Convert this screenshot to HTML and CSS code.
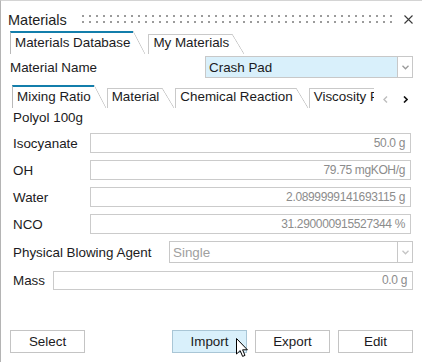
FILE: index.html
```html
<!DOCTYPE html>
<html>
<head>
<meta charset="utf-8">
<link rel="stylesheet" href="styles.css">
</head>
<body>
<div class="panel">
  <div class="header">
    <span class="title">Materials</span>
    <span class="grip"></span>
    <svg class="close" width="9" height="9" viewBox="0 0 9 9"><path d="M0.5 0.5L8.5 8.5M8.5 0.5L0.5 8.5" stroke="#3a3a3a" stroke-width="1.1" fill="none"/></svg>
  </div>

  <div class="tabs tabs-top">
    <div class="tab active">Materials Database</div>
    <div class="tab">My Materials</div>
  </div>

  <div class="name-row">
    <span class="name-label">Material Name</span>
    <div class="combo combo-blue">
      <span class="combo-text">Crash Pad</span>
      <span class="combo-btn"><svg width="7" height="5" viewBox="0 0 7 5"><path d="M0.5 0.8L3.5 3.8L6.5 0.8" stroke="#9a9a9a" stroke-width="1.3" fill="none"/></svg></span>
    </div>
  </div>

  <div class="subtabs">
    <div class="strip">
      <div class="tab active">Mixing Ratio</div>
      <div class="tab">Material</div>
      <div class="tab">Chemical Reaction</div>
      <div class="tab">Viscosity Profile</div>
    </div>
    <div class="scrollers">
      <svg width="5" height="7" viewBox="0 0 5 7"><path d="M4 0.5L1 3.5L4 6.5" stroke="#bdbdbd" stroke-width="1.4" fill="none"/></svg>
      <svg width="5" height="7" viewBox="0 0 5 7"><path d="M1 0.5L4 3.5L1 6.5" stroke="#111" stroke-width="1.6" fill="none"/></svg>
    </div>
  </div>

  <div class="polyol">Polyol 100g</div>

  <div class="grid-rows">
    <span class="lbl">Isocyanate</span><div class="field">50.0 g</div>
    <span class="lbl">OH</span><div class="field">79.75 mgKOH/g</div>
    <span class="lbl">Water</span><div class="field">2.0899999141693115 g</div>
    <span class="lbl">NCO</span><div class="field">31.290000915527344 %</div>
  </div>

  <div class="row row-pba">
    <span class="lbl lbl-pba">Physical Blowing Agent</span>
    <div class="combo combo-white">
      <span class="combo-text placeholder">Single</span>
      <span class="combo-btn"><svg width="7" height="5" viewBox="0 0 7 5"><path d="M0.5 0.8L3.5 3.8L6.5 0.8" stroke="#c4c4c4" stroke-width="1.3" fill="none"/></svg></span>
    </div>
  </div>

  <div class="row row-mass">
    <span class="lbl lbl-mass">Mass</span>
    <div class="field">0.0 g</div>
  </div>

  <div class="buttons">
    <button class="btn">Select</button>
    <span class="spacer"></span>
    <button class="btn btn-hover">Import
      <svg class="cursor" width="13" height="20" viewBox="0 0 13 20"><path d="M0.5 0.5L0.5 16L4.2 12.6L6.6 18.4L9 17.4L6.6 11.8L11.4 11.8Z" fill="#fff" stroke="#000" stroke-width="1" stroke-linejoin="miter"/></svg>
    </button>
    <button class="btn">Export</button>
    <button class="btn">Edit</button>
  </div>
</div>
</body>
</html>
```

FILE: styles.css
```css
* { box-sizing: border-box; }
html, body { margin: 0; padding: 0; background: #fff; }
body {
  font-family: "Liberation Sans", Arial, sans-serif;
  font-size: 13.4px;
  color: #1b1b22;
}
.panel {
  width: 422px;
  height: 362px;
  border-top: 1px solid #d4d4d4;
  border-left: 1px solid #b4b4b4;
  padding: 10px 9px 9px 9px;
  display: flex;
  flex-direction: column;
  overflow: hidden;
}
.header {
  display: flex;
  align-items: flex-start;
  height: 18px;
  margin-left: -2px;
}
.title {
  font-size: 14.5px;
  line-height: 18px;
  color: #1e1e1e;
}
.grip {
  flex: 1;
  height: 8px;
  margin: 4px 10px 0 15px;
  background-image: radial-gradient(circle at 1px 1px, #9b9b9b 0.8px, transparent 1.1px);
  background-size: 7px 6px;
}
.close { flex: none; margin-top: 4px; }

.tabs {
  display: flex;
  align-items: flex-end;
  height: 23px;
}
.tabs-top { margin-top: 2px; }
.tab {
  position: relative;
  height: 20px;
  line-height: 16px;
  padding: 0 3px 3px 4px;
  display: flex;
  align-items: flex-end;
  border-top: 1px solid #c9c9c9;
  border-left: 1px solid #c9c9c9;
  margin-right: 15px;
  white-space: nowrap;
  flex: none;
}
.tab::after {
  content: "";
  position: absolute;
  left: 100%;
  top: -1px;
  bottom: 0;
  width: 12px;
  background: linear-gradient(to top right, transparent calc(50% - 0.7px), #c6c6c6 50%, transparent calc(50% + 0.7px));
}
.tab.active {
  height: 23px;
  border-top: 2px solid #137eab;
  border-left-color: #b9b9b9;
}
.tab.active::after { top: -2px; }

.name-row {
  display: flex;
  align-items: center;
  margin-top: 2px;
  height: 22px;
}
.name-label { width: 195px; flex: none; }
.combo {
  flex: 1;
  display: flex;
  height: 100%;
  border: 1px solid #c8c8c8;
}
.combo-blue { background: #d9f0fb; }
.combo-white { background: #fff; }
.combo-text {
  flex: 1;
  padding-left: 3px;
  display: flex;
  align-items: center;
}
.placeholder { color: #a0a0a0; }
.combo-btn {
  width: 15px;
  flex: none;
  background: #fff;
  border-left: 1px solid #c8c8c8;
  display: flex;
  align-items: center;
  justify-content: center;
}

.subtabs {
  display: flex;
  align-items: flex-end;
  height: 23px;
  margin-top: 7px;
  padding-left: 2px;
}
.subtabs .tab { margin-right: 13px; }
.strip {
  display: flex;
  align-items: flex-end;
  width: 362px;
  height: 23px;
  overflow: hidden;
  flex: none;
}
.scrollers {
  flex: 1;
  display: flex;
  align-items: center;
  align-self: center;
  gap: 15px;
  padding-left: 9px;
  margin-top: 6px;
}

.polyol {
  margin-top: 2px;
  padding-left: 3px;
  line-height: 16px;
}

.grid-rows {
  margin-top: 7px;
  display: grid;
  grid-template-columns: 77px 1fr;
  grid-auto-rows: 20px;
  row-gap: 7px;
  padding-left: 3px;
  padding-right: 2px;
  align-items: center;
}
.field {
  height: 20px;
  border: 1px solid #cbcbcb;
  color: #8c8c8c;
  font-size: 12px;
  letter-spacing: -0.35px;
  text-align: right;
  padding-right: 5px;
  line-height: 18px;
  flex: 1;
}
.row {
  display: flex;
  align-items: center;
  padding-left: 3px;
}
.row-pba { margin-top: 7px; height: 22px; }
.row-mass { margin-top: 8px; height: 19px; }
.row-mass .field { height: 19px; line-height: 17px; }
.lbl-pba { width: 156px; flex: none; }
.lbl-mass { width: 40px; flex: none; }

.buttons {
  margin-top: auto;
  display: flex;
  gap: 8px;
  height: 23px;
}
.spacer { flex: 1; }
.btn {
  position: relative;
  width: 75px;
  height: 23px;
  border: 1px solid #c4c4c4;
  background: #fff;
  font-family: inherit;
  font-size: 13.4px;
  color: #1b1b22;
  padding: 0;
}
.btn-hover {
  background: #d9f0fb;
  border-color: #a9c6d6;
}
.cursor {
  position: absolute;
  left: 63px;
  top: 7px;
}
```
